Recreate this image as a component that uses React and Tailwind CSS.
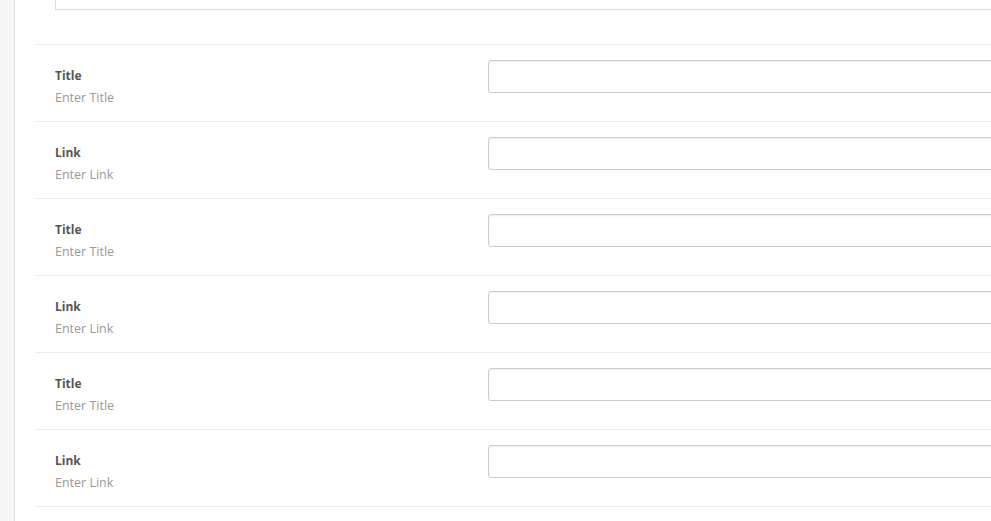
import React from 'react';

const rows = [
  { label: 'Title', hint: 'Enter Title' },
  { label: 'Link', hint: 'Enter Link' },
  { label: 'Title', hint: 'Enter Title' },
  { label: 'Link', hint: 'Enter Link' },
  { label: 'Title', hint: 'Enter Title' },
  { label: 'Link', hint: 'Enter Link' },
];

export default function App() {
  return (
    <div
      className="w-full h-[521px] overflow-hidden bg-white"
      style={{ fontFamily: '"Open Sans", "Liberation Sans", sans-serif' }}
    >
      <div className="flex h-full min-w-[1100px]">
        {/* side strip */}
        <div className="w-[15px] shrink-0 bg-[#f7f7f7] border-r border-[#dedede]" />

        <div className="flex-1 pl-[20px]">
          {/* tail of previous textarea */}
          <div className="h-[44px] pl-[20px] overflow-hidden">
            <div className="mt-[-30px] h-[40px] border border-[#dcdcdc] bg-white" />
          </div>

          {rows.map((row, i) => (
            <div key={i} className="flex h-[77px] border-t border-[#ebebeb]">
              <div className="w-[453px] shrink-0 pl-[20px] pt-[20px] leading-[22px]">
                <p className="text-[12px] font-bold text-[#555]">{row.label}</p>
                <p className="text-[12.5px] text-[#999]">{row.hint}</p>
              </div>
              <div className="flex-1 pt-[15px]">
                <input
                  type="text"
                  className="block w-full h-[33px] rounded-[3px] border border-[#cccccc] bg-white shadow-[inset_0_1px_2px_rgba(0,0,0,0.08)] outline-none"
                />
              </div>
            </div>
          ))}
          <div className="border-t border-[#ebebeb]" />
        </div>
      </div>
    </div>
  );
}
